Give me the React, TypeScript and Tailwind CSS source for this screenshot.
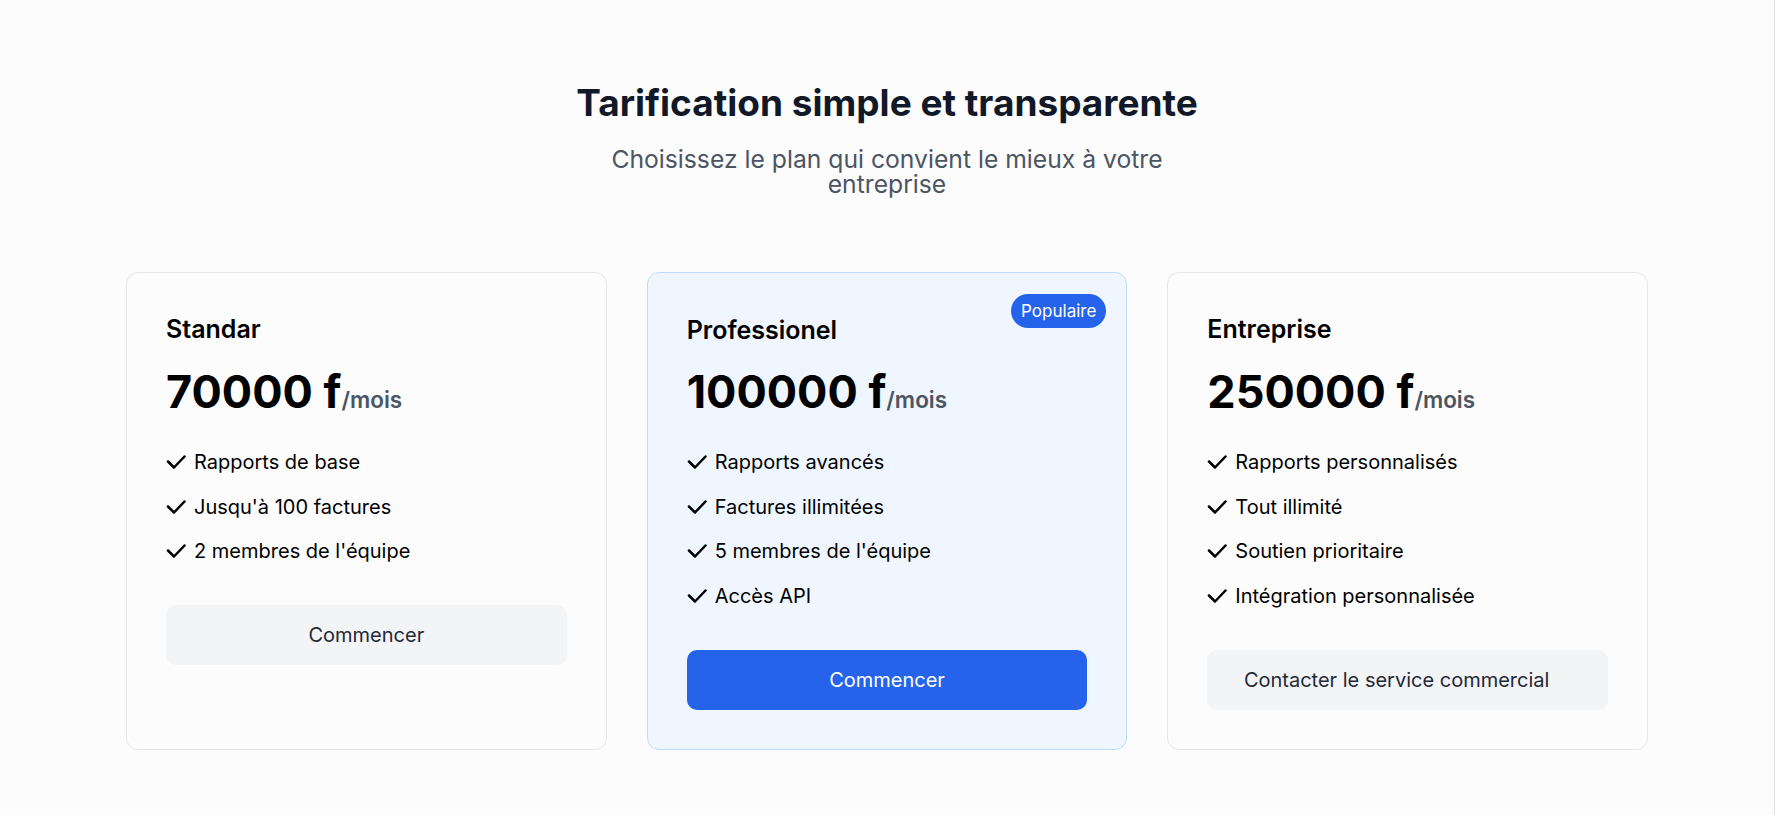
const PLANS = [
  {
    name: "Standar",
    price: "70000 f",
    features: ["Rapports de base", "Jusqu'à 100 factures", "2 membres de l'équipe"],
    cta: "Commencer",
    popular: false,
  },
  {
    name: "Professionel",
    price: "100000 f",
    features: ["Rapports avancés", "Factures illimitées", "5 membres de l'équipe", "Accès API"],
    cta: "Commencer",
    popular: true,
  },
  {
    name: "Entreprise",
    price: "250000 f",
    features: ["Rapports personnalisés", "Tout illimité", "Soutien prioritaire", "Intégration personnalisée"],
    cta: "Contacter le service commercial",
    popular: false,
  },
];

function CheckIcon() {
  return (
    <svg width="20" height="16" viewBox="0 0 20 16" fill="none" className="shrink-0">
      <path d="M2 7.5l6 6L18.5 2.5" stroke="#000" strokeWidth="2.5" strokeLinecap="round" strokeLinejoin="round" />
    </svg>
  );
}

export default function App() {
  return (
    <div
      className="min-h-screen w-full bg-[#fcfcfc] border-r border-[#dedede] pt-[80px] pb-16"
      style={{ fontFamily: "Inter, 'Noto Sans', sans-serif" }}
    >
      <div className="text-center">
        <h2 className="text-[37px] leading-[45px] font-bold text-[#111827]">
          Tarification simple et transparente
        </h2>
        <p className="mt-[22px] mx-auto max-w-[560px] text-[24.7px] leading-[25px] text-[#4b5563]">
          Choisissez le plan qui convient le mieux à votre entreprise
        </p>
      </div>

      <div className="mt-[75px] mx-auto w-[1522px] grid grid-cols-3 gap-10">
        {PLANS.map(plan => (
          <div
            key={plan.name}
            className={
              plan.popular
                ? "relative rounded-[12px] border border-[#bfdbfe] bg-[#eff6ff] p-[39px]"
                : "relative rounded-[12px] border border-[#e5e7eb] bg-[#fcfcfc] p-[39px]"
            }
          >
            {plan.popular && (
              <span className="absolute top-[21px] right-[20px] rounded-full bg-[#2563eb] px-[10px] py-[5px] text-[17px] leading-[24px] text-white">
                Populaire
              </span>
            )}
            <h3 className={plan.popular ? "mt-[1px] text-[25px] leading-[35px] font-semibold text-black" : "text-[25px] leading-[35px] font-semibold text-black"}>
              {plan.name}
            </h3>
            <div className={plan.popular ? "mt-[19px] flex items-baseline" : "mt-5 flex items-baseline"}>
              <span className="text-[45px] leading-[50px] font-bold text-black">{plan.price}</span>
              <span className="text-[22.5px] leading-[30px] font-semibold text-[#4b5563]">/mois</span>
            </div>
            <ul className="mt-[30px] flex flex-col gap-[14.5px]">
              {plan.features.map(f => (
                <li key={f} className="flex items-center gap-2 text-[20px] leading-[30px] text-black">
                  <CheckIcon />
                  <span>{f}</span>
                </li>
              ))}
            </ul>
            <button
              className={
                plan.popular
                  ? "mt-[39px] w-full rounded-[10px] bg-[#2563eb] py-[15px] text-[20px] leading-[30px] text-white"
                  : plan.cta === "Commencer"
                  ? "mt-[39px] w-full rounded-[10px] bg-[#f3f4f6] py-[15px] text-[20px] leading-[30px] text-[#1f2937]"
                  : "mt-[39px] w-full rounded-[10px] bg-[#f3f4f6] py-[15px] pr-[22px] text-[20px] leading-[30px] text-[#1f2937]"
              }
            >
              {plan.cta}
            </button>
          </div>
        ))}
      </div>
    </div>
  );
}
